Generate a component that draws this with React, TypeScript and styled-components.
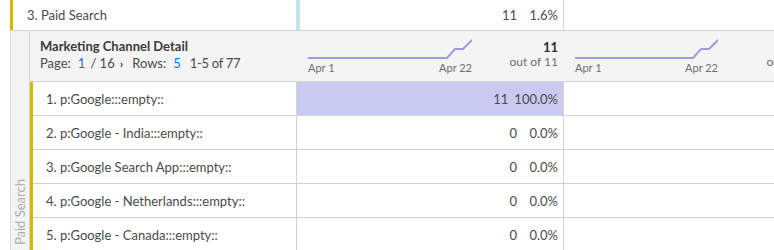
import React from "react";
import styled, { createGlobalStyle } from "styled-components";

const GlobalStyle = createGlobalStyle`
  html, body {
    margin: 0;
    padding: 0;
    background: #ffffff;
    overflow: hidden;
  }
  body {
    font-family: Lato, "Noto Sans", sans-serif;
    font-size: 13px;
    color: #4b4b4b;
  }
`;

const YELLOW = "#d7b700";
const BORDER = "#d3d3d3";
const SPARK = "#9c9be2";

const Page = styled.div`
  width: 774px;
  height: 250px;
  overflow: hidden;
  padding-left: 10px;
  box-sizing: border-box;
`;

const Canvas = styled.div`
  width: 900px;
`;

const TopRow = styled.div`
  display: grid;
  grid-template-columns: 286px 268px 1fr;
  height: 30px;
  border-bottom: 1px solid ${BORDER};
`;

const NameCell = styled.div<{ $pad: number; $divider?: boolean }>`
  display: flex;
  align-items: center;
  padding-left: ${(p) => p.$pad}px;
  white-space: nowrap;
  border-right: ${(p) => (p.$divider ? `1px solid ${BORDER}` : "none")};
`;

const TopName = styled(NameCell)`
  border-left: 3px solid ${YELLOW};
`;

const MetricCell = styled.div<{ $highlight?: boolean; $accent?: boolean }>`
  display: flex;
  align-items: center;
  justify-content: flex-end;
  padding-right: 5px;
  background: ${(p) => (p.$highlight ? "#cacaf0" : "transparent")};
  border-left: ${(p) => (p.$accent ? "4px solid #bde7eb" : "none")};
  border-right: 1px solid ${BORDER};
  white-space: nowrap;
`;

const Num = styled.span`
  margin-right: 6px;
`;

const Pct = styled.span`
  min-width: 35px;
  text-align: right;
`;

const Breakdown = styled.div`
  display: flex;
`;

const SideLabel = styled.div`
  width: 18px;
  flex: none;
  background: #f4f4f4;
  border-left: 1px solid #dedede;
  border-right: 1px solid ${BORDER};
  display: flex;
  flex-direction: column;
  justify-content: flex-end;
  align-items: center;
  padding-bottom: 7px;
  box-sizing: content-box;
`;

const SideText = styled.span`
  writing-mode: vertical-rl;
  transform: rotate(180deg);
  color: #acacac;
  font-size: 13px;
  white-space: nowrap;
  line-height: 13px;
`;

const Nested = styled.div`
  display: flex;
  flex-direction: column;
`;

const HeaderRow = styled.div`
  display: grid;
  grid-template-columns: 267px 267px 257px;
  height: 50px;
  background: #f4f4f4;
  border-bottom: 1px solid ${BORDER};
`;

const HeaderTitle = styled.div`
  padding: 7px 0 0 10px;
  white-space: nowrap;
`;

const Title = styled.div`
  font-weight: 700;
  color: #3b3b3b;
  line-height: 17px;
`;

const Pager = styled.div`
  line-height: 17px;
  display: flex;
  align-items: center;
`;

const Blue = styled.span`
  color: #1473e6;
  margin: 0 5px 0 7px;
`;

const Chevron = styled.span`
  font-size: 12px;
  font-weight: 700;
  margin: 0 9px 0 5px;
  color: #4b4b4b;
`;

const Range = styled.span`
  margin-left: 4px;
  letter-spacing: -0.3px;
`;

const HeaderMetric = styled.div`
  display: flex;
  justify-content: space-between;
  padding: 6px 6px 0 11px;
  overflow: hidden;
`;

const Spark = styled.div<{ $w: number }>`
  width: ${(p) => p.$w}px;
  flex: none;
  display: flex;
  flex-direction: column;
`;

const SparkLabels = styled.div`
  display: flex;
  justify-content: space-between;
  font-size: 11px;
  line-height: 13px;
  color: #6e6e6e;
`;

const Stats = styled.div`
  display: flex;
  flex-direction: column;
  align-items: flex-end;
  padding-top: 2px;
  white-space: nowrap;
`;

const StatNum = styled.div`
  font-weight: 700;
  color: #2f2f2f;
  line-height: 16px;
`;

const StatSub = styled.div`
  font-size: 12px;
  line-height: 14px;
  color: #6e6e6e;
`;

const Rows = styled.div`
  border-left: 3px solid ${YELLOW};
`;

const DataRow = styled.div`
  display: grid;
  grid-template-columns: 264px 267px 257px;
  height: 33px;
  border-bottom: 1px solid ${BORDER};
`;

const Empty = styled.div``;

function Sparkline({ width }: { width: number }) {
  const h = 24;
  const pts = [
    [0, 21],
    [width - 25, 21],
    [width - 17, 12],
    [width - 9, 12],
    [width, 3],
  ]
    .map((p) => p.join(","))
    .join(" ");
  return (
    <Spark $w={width}>
      <svg width={width} height={h} viewBox={`0 0 ${width} ${h}`}>
        <polyline points={pts} fill="none" stroke={SPARK} strokeWidth={2} />
      </svg>
      <SparkLabels>
        <span>Apr 1</span>
        <span>Apr 22</span>
      </SparkLabels>
    </Spark>
  );
}

const rows = [
  { name: "1. p:Google:::empty::", n: "11", pct: "100.0%", hl: true },
  { name: "2. p:Google - India:::empty::", n: "0", pct: "0.0%" },
  { name: "3. p:Google Search App:::empty::", n: "0", pct: "0.0%" },
  { name: "4. p:Google - Netherlands:::empty::", n: "0", pct: "0.0%" },
  { name: "5. p:Google - Canada:::empty::", n: "0", pct: "0.0%" },
];

export default function App() {
  return (
    <>
      <GlobalStyle />
      <Page>
        <Canvas>
          <TopRow>
            <TopName $pad={14}>3. Paid Search</TopName>
            <MetricCell $accent>
              <Num>11</Num>
              <Pct>1.6%</Pct>
            </MetricCell>
            <Empty />
          </TopRow>
          <Breakdown>
            <SideLabel>
              <SideText>Paid Search</SideText>
            </SideLabel>
            <Nested>
              <HeaderRow>
                <HeaderTitle>
                  <Title>Marketing Channel Detail</Title>
                  <Pager>
                    Page:<Blue>1</Blue>/ 16<Chevron>›</Chevron>Rows:<Blue>5</Blue>
                    <Range>1-5 of 77</Range>
                  </Pager>
                </HeaderTitle>
                <HeaderMetric>
                  <Sparkline width={164} />
                  <Stats>
                    <StatNum>11</StatNum>
                    <StatSub>out of 11</StatSub>
                  </Stats>
                </HeaderMetric>
                <HeaderMetric>
                  <Sparkline width={143} />
                  <Stats>
                    <StatNum>11</StatNum>
                    <StatSub>out of 11</StatSub>
                  </Stats>
                </HeaderMetric>
              </HeaderRow>
              <Rows>
                {rows.map((r) => (
                  <DataRow key={r.name}>
                    <NameCell $pad={13} $divider>
                      {r.name}
                    </NameCell>
                    <MetricCell $highlight={r.hl}>
                      <Num>{r.n}</Num>
                      <Pct>{r.pct}</Pct>
                    </MetricCell>
                    <Empty />
                  </DataRow>
                ))}
              </Rows>
            </Nested>
          </Breakdown>
        </Canvas>
      </Page>
    </>
  );
}
